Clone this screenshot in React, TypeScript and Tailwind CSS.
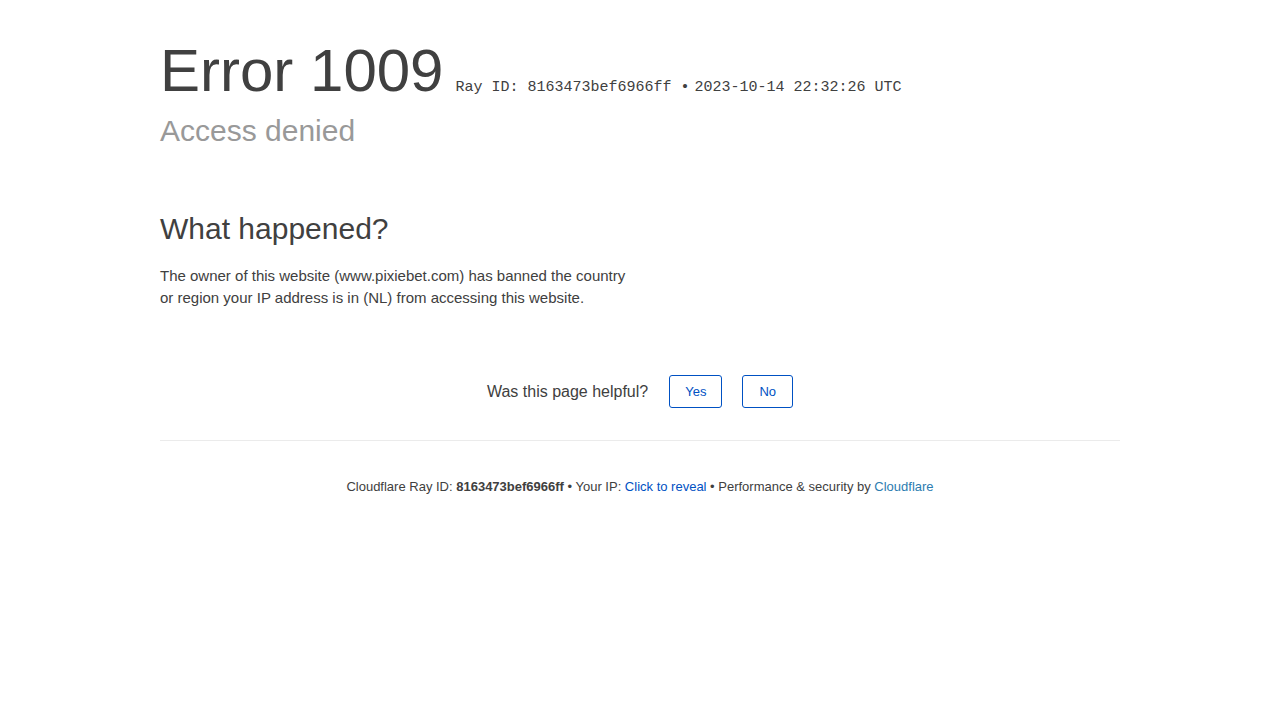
import React from "react";

export default function App() {
  const sans = { fontFamily: '"Liberation Sans", Arial, sans-serif' };
  return (
    <div className="min-h-[720px] bg-white text-[#404040]" style={sans}>
      <div className="mx-auto w-[960px]">
        <div className="pt-[41px]">
          <h1 className="text-[60px] leading-[60px] font-normal text-[#404040] whitespace-nowrap">
            <span>Error</span> <span>1009</span>
            <span className="ml-[12px] text-[15px] leading-[15px] text-[#404040]" style={{ fontFamily: '"Liberation Mono", "Courier New", monospace' }}>
              <span>Ray ID: 8163473bef6966ff •</span>
              <span className="ml-[-4px]"> 2023-10-14 22:32:26 UTC</span>
            </span>
          </h1>
          <h2 className="mt-[11px] text-[30px] leading-[38px] font-normal text-[#999999]">Access denied</h2>
        </div>

        <div className="mt-[60px]">
          <h2 className="text-[30px] leading-[38px] font-normal text-[#404040]">What happened?</h2>
          <p className="mt-[17px] w-[470px] text-[15px] leading-[22px] text-[#404040]">
            The owner of this website (www.pixiebet.com) has banned the country or region your IP address is in (NL) from accessing this website.
          </p>
        </div>

        <div className="mt-[66px] flex items-center justify-center">
          <span className="text-[16px] leading-[20px] text-[#404040]">Was this page helpful?</span>
          <button className="ml-[21px] rounded-[3px] border border-[#0051c3] bg-white px-[15px] py-2 text-[13px] leading-[15px] text-[#0051c3]">Yes</button>
          <button className="ml-[20px] rounded-[3px] border border-[#0051c3] bg-white px-[16px] py-2 text-[13px] leading-[15px] text-[#0051c3]">No</button>
        </div>

        <div className="mt-[32px] border-t border-[#ebebeb]" />

        <div className="mt-[36px] text-center text-[13px] leading-[20px] text-[#404040]">
          <span>Cloudflare Ray ID: </span>
          <strong className="font-bold">8163473bef6966ff</strong>
          <span> • </span>
          <span>Your IP: </span>
          <span className="text-[#0051c3]">Click to reveal</span>
          <span> • </span>
          <span>Performance &amp; security by </span>
          <span className="text-[#2c7cb0]">Cloudflare</span>
        </div>
      </div>
    </div>
  );
}
